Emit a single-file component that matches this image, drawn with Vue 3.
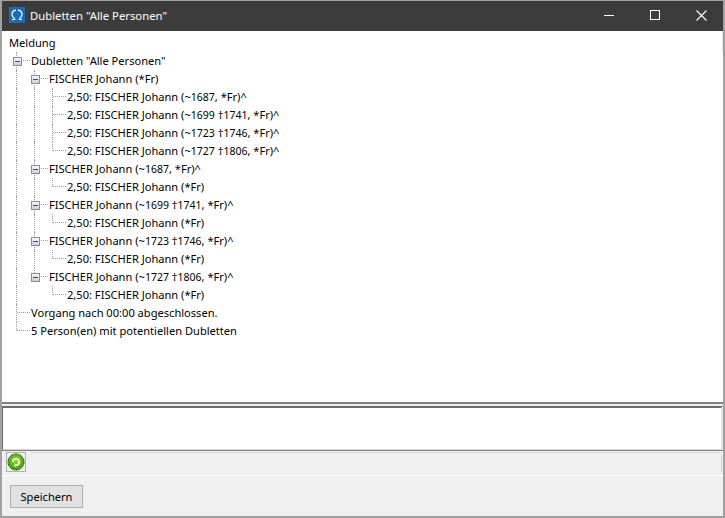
<script setup>
const source = [
  { t: 'Meldung', l: 0 },
  { t: 'Dubletten "Alle Personen"', l: 1, box: true, stem: true },
  { t: 'FISCHER Johann (*Fr)', l: 2, box: true },
  { t: '2,50: FISCHER Johann (~1687, *Fr)^', l: 3, stem: true },
  { t: '2,50: FISCHER Johann (~1699 †1741, *Fr)^', l: 3, stem: true },
  { t: '2,50: FISCHER Johann (~1723 †1746, *Fr)^', l: 3, stem: true },
  { t: '2,50: FISCHER Johann (~1727 †1806, *Fr)^', l: 3 },
  { t: 'FISCHER Johann (~1687, *Fr)^', l: 2, box: true },
  { t: '2,50: FISCHER Johann (*Fr)', l: 3 },
  { t: 'FISCHER Johann (~1699 †1741, *Fr)^', l: 2, box: true },
  { t: '2,50: FISCHER Johann (*Fr)', l: 3 },
  { t: 'FISCHER Johann (~1723 †1746, *Fr)^', l: 2, box: true },
  { t: '2,50: FISCHER Johann (*Fr)', l: 3 },
  { t: 'FISCHER Johann (~1727 †1806, *Fr)^', l: 2, box: true, last: true },
  { t: '2,50: FISCHER Johann (*Fr)', l: 3, under: true },
  { t: 'Vorgang nach 00:00 abgeschlossen.', l: 1, stem: true },
  { t: '5 Person(en) mit potentiellen Dubletten', l: 1 },
]
// Years are set slightly narrower, as the digits are in the reference's face.
const rows = source.map((r) => ({
  ...r,
  parts: r.t.split(/(\d{4})/).map((text) => ({ text, year: /^\d{4}$/.test(text) })),
}))
</script>

<template>
  <div class="window">
    <header class="titlebar">
      <svg class="appicon" width="16" height="16" viewBox="0 0 16 16">
        <rect width="16" height="16" fill="#1a6cb5" />
        <path d="M3 12.5h2.6v-1.1C4 10.5 3 9.100 3 7.400 3 5.100 4.700 3.500 7 3.200M9 3.200c2.300.3 4 1.900 4 4.200 0 1.700-1 3.100-2.600 4v1.100H13" fill="none" stroke="#fff" stroke-width="1.2" />
      </svg>
      <span class="wintitle">Dubletten "Alle Personen"</span>
      <div class="controls">
        <span class="ctl"><i class="min"></i></span>
        <span class="ctl"><i class="max"></i></span>
        <span class="ctl">
          <svg width="11" height="11" viewBox="0 0 11 11"><path d="M.5.5l10 10M10.500.5l-10 10" stroke="#fff" stroke-width="1.1" /></svg>
        </span>
      </div>
    </header>
    <section class="tree">
      <i class="scrollhint"></i>
      <div v-for="(r, i) in rows" :key="i" class="row" :class="'lvl' + r.l">
        <span v-if="r.l >= 2 || r.under" class="trunk"></span>
        <span v-if="r.l === 3 && !r.under" class="branch"></span>
        <span v-if="r.l >= 1" class="guide" :class="{ stem: r.stem, last: r.last }"></span>
        <span v-if="r.box" class="box"><i></i></span>
        <span class="label"><template v-for="(p, j) in r.parts" :key="j"><span v-if="p.year" class="year">{{ p.text }}</span><template v-else>{{ p.text }}</template></template></span>
      </div>
    </section>
    <div class="memo"><div class="memoinner"></div></div>
    <div class="toolbar">
      <span class="toolbtn">
        <svg width="18" height="18" viewBox="0 0 18 18">
          <defs>
            <radialGradient id="gr" cx="50%" cy="40%" r="60%">
              <stop offset="0" stop-color="#9ade2a" />
              <stop offset="1" stop-color="#3f9a08" />
            </radialGradient>
          </defs>
          <circle cx="9" cy="9" r="8" fill="url(#gr)" stroke="#23570a" stroke-dasharray="2 .6" />
          <path d="M5.800 9a3.200 3.200 0 1 1 3.200 3.200" fill="none" stroke="#fff" stroke-width="1.600" />
          <path d="M7.500 10.500l3 1.700-2.800 1.800z" fill="#fff" />
        </svg>
      </span>
      <span class="grip"></span>
    </div>
    <footer class="footer">
      <button class="save">Speichern</button>
    </footer>
  </div>
</template>

<style>
html, body { margin: 0; background: #f0f0f0; }
</style>

<style scoped>
.window {
  width: 725px;
  height: 518px;
  box-sizing: border-box;
  display: flex;
  flex-direction: column;
  background: #f0f0f0;
  border-style: solid;
  border-color: #a0a0a0;
  border-width: 1px 2px 2px 2px;
  font-family: "Noto Sans", "Open Sans", sans-serif;
  font-size: 11.1px;
  color: #000;
  overflow: hidden;
}
.titlebar {
  height: 30px;
  flex: none;
  background: #3c3c3c;
  display: flex;
  align-items: center;
  padding-left: 7px;
  color: #fff;
}
.appicon { flex: none; margin-bottom: 2px; }
.wintitle { margin-left: 5px; margin-bottom: 1px; font-size: 11.3px; }
.controls { margin-left: auto; margin-right: -1px; display: flex; height: 100%; box-sizing: border-box; padding-bottom: 2px; }
.ctl { width: 46px; display: flex; align-items: center; justify-content: center; }
.min { display: block; width: 10px; height: 1px; background: #fff; }
.max { display: block; width: 8px; height: 8px; border: 1px solid #fff; }
.tree {
  height: 373px;
  flex: none;
  box-sizing: border-box;
  background: #fff;
  border-bottom: 2px solid #808080;
  padding-top: 3px;
  padding-left: 7px;
  position: relative;
}
.scrollhint {
  position: absolute;
  right: 0;
  top: 0;
  width: 1px;
  height: 21px;
  background: #e4e4e4;
}
.row { position: relative; height: 18px; display: flex; align-items: center; white-space: nowrap; }
.lvl1 { padding-left: 22px; }
.lvl2 { padding-left: 40px; }
.lvl3 { padding-left: 58px; }
.label { line-height: 18px; }
.year { font-size: 10.5px; }
.box {
  position: absolute;
  top: 5px;
  width: 9px;
  height: 9px;
  box-sizing: border-box;
  border: 1px solid #8e8e8e;
  background: linear-gradient(#f6f6f6, #c9d0d8);
  display: flex;
  align-items: center;
  justify-content: center;
  z-index: 1;
}
.box i { display: block; width: 5px; height: 1px; background: #2f4f9a; }
.lvl1 .box { left: 4px; }
.lvl2 .box { left: 22px; }
.trunk, .branch, .guide { position: absolute; left: 0; top: 0; height: 18px; pointer-events: none; }
.trunk { left: 7px; border-left: 1px dotted #a0a0a0; }
.branch { left: 25px; border-left: 1px dotted #a0a0a0; }
.guide { width: 100%; }
.guide::before, .guide::after { content: ""; position: absolute; }
.lvl1 .guide::before { left: 7px; top: 0; height: 9px; border-left: 1px dotted #a0a0a0; }
.lvl1 .guide.stem::before { height: 18px; }
.lvl1 .guide::after { left: 8px; top: 8px; width: 13px; border-top: 1px dotted #a0a0a0; }
.lvl2 .guide::before { left: 25px; top: 0; height: 18px; border-left: 1px dotted #a0a0a0; }
.lvl2 .guide.last::before { height: 9px; }
.lvl2 .guide::after { left: 26px; top: 8px; width: 13px; border-top: 1px dotted #a0a0a0; }
.lvl3 .guide::before { left: 43px; top: 0; height: 9px; border-left: 1px dotted #a0a0a0; }
.lvl3 .guide.stem::before { height: 18px; }
.lvl3 .guide::after { left: 44px; top: 8px; width: 13px; border-top: 1px dotted #a0a0a0; }
.memo {
  height: 47px;
  flex: none;
  box-sizing: border-box;
  padding-top: 2px;
  border-bottom: 1px solid #808080;
  background: #f0f0f0;
}
.memoinner {
  height: 100%;
  box-sizing: border-box;
  background: #fff;
  border-style: solid;
  border-width: 2px 2px 1px 1px;
  border-color: #6e6e6e #e4e4e4 #d8d8d8 #6e6e6e;
}
.toolbar {
  height: 25px;
  flex: none;
  box-sizing: border-box;
  display: flex;
  align-items: flex-start;
  padding: 1px 1px 0 4px;
  border-bottom: 1px solid #fff;
  position: relative;
}
.toolbar::before {
  content: "";
  position: absolute;
  left: 29px;
  right: 2px;
  top: 1px;
  height: 1px;
  background: #dcdcdc;
}
.toolbtn {
  width: 18px;
  height: 18px;
  padding: 0;
  border: 1px solid #b0b0b0;
  display: flex;
  align-items: center;
  justify-content: center;
}
.grip {
  margin-left: auto;
  margin-top: 3px;
  width: 1px;
  height: 17px;
  background: #d0d0d0;
}
.footer {
  flex: 1;
  padding: 9px 0 0 8px;
}
.save {
  width: 73px;
  height: 23px;
  padding: 0;
  margin: 0;
  font: inherit;
  color: #000;
  background: #e1e1e1;
  border: 1px solid #adadad;
}
</style>
